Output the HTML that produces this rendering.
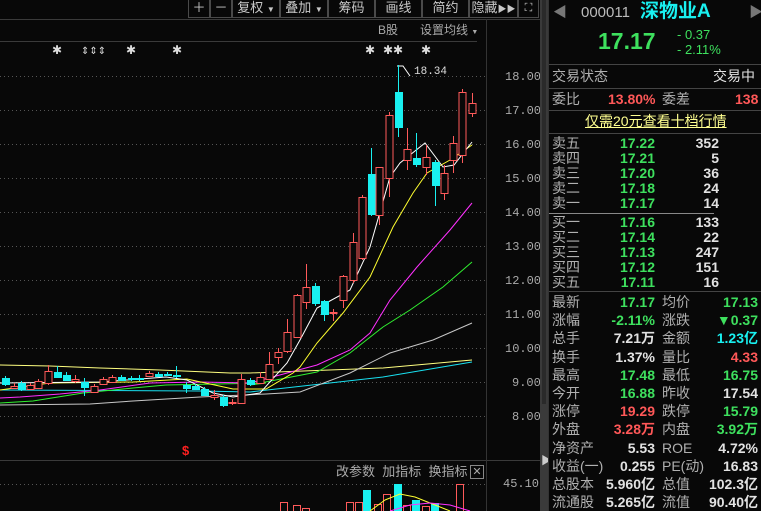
<!DOCTYPE html>
<html style="overflow:hidden;width:761px;height:511px"><head><meta charset="utf-8"><style>
*{margin:0;padding:0;box-sizing:border-box}
body{width:761px;height:511px;background:#080808;overflow:hidden;position:relative;font-family:"Liberation Sans","Noto Sans CJK SC",sans-serif;color:#b4b4b4}
.a{position:absolute;white-space:nowrap;line-height:1}
.tb{position:absolute;top:0;height:18px;border:1px solid #4a4a4a;border-top:none;color:#c8c8c8;font-size:13px;text-align:center;line-height:16px}
.g{color:#3ee05e}.r{color:#ff5858}.w{color:#e2e2e2}.c{color:#19f0f0}.l{color:#b0b0b0}
.rp{font-size:14px}
.hl{position:absolute;height:1px;background:#3a3a3a}
</style></head><body>
<div class="tb" style="left:188px;width:22px">＋</div>
<div class="tb" style="left:210px;width:22px">－</div>
<div class="tb" style="left:232px;width:48px">复权 <span style="font-size:8px">▼</span></div>
<div class="tb" style="left:280px;width:48px">叠加 <span style="font-size:8px">▼</span></div>
<div class="tb" style="left:328px;width:47px">筹码</div>
<div class="tb" style="left:375px;width:47px">画线</div>
<div class="tb" style="left:422px;width:47px">简约</div>
<div class="tb" style="left:469px;width:49px">隐藏<span style="font-size:9px">▶▶</span></div>
<div class="tb" style="left:518px;width:21px;font-size:11px">⛶</div>
<div class="hl" style="left:0;top:19px;width:540px"></div>
<div class="hl" style="left:0;top:41px;width:477px"></div>
<div class="hl" style="left:0;top:460px;width:540px"></div>
<div style="position:absolute;left:486px;top:19px;width:1px;height:492px;background:#333"></div>
<div style="position:absolute;left:540px;top:0;width:8px;height:511px;background:#3a3a3a"></div>
<div style="position:absolute;left:542px;top:0;width:4px;height:404px;background:#2a2a2a"></div>
<div class="a" style="left:541px;top:456px;color:#ccc;font-size:11px">▶</div>
<div class="a" style="left:378px;top:24px;font-size:12px;color:#aaa">B股</div>
<div class="a" style="left:420px;top:24px;font-size:12px;color:#aaa">设置均线 <span style="font-size:7px">▼</span></div>
<div class="a" style="left:182px;top:444px;font-size:13px;color:#ff2020;font-weight:bold">$</div>
<div class="a" style="left:336px;top:465px;font-size:13px;color:#aaa">改参数&nbsp; 加指标&nbsp; 换指标</div>
<div style="position:absolute;left:470px;top:465px;width:14px;height:14px;border:1px solid #888;color:#aaa;font-size:11px;line-height:12px;text-align:center">✕</div>
<div class="a" style="left:503px;top:478px;font-size:12px;color:#aaa;font-family:'Liberation Mono',monospace">45.10</div>
<svg style="position:absolute;left:0;top:0" width="540" height="511">
<g stroke="#555" stroke-dasharray="1 3" stroke-width="1">
<line x1="0" y1="76.5" x2="486" y2="76.5"/><line x1="0" y1="110.5" x2="486" y2="110.5"/><line x1="0" y1="144.5" x2="486" y2="144.5"/><line x1="0" y1="178.5" x2="486" y2="178.5"/><line x1="0" y1="212.5" x2="486" y2="212.5"/><line x1="0" y1="246.5" x2="486" y2="246.5"/><line x1="0" y1="280.5" x2="486" y2="280.5"/><line x1="0" y1="314.5" x2="486" y2="314.5"/><line x1="0" y1="348.5" x2="486" y2="348.5"/><line x1="0" y1="382.5" x2="486" y2="382.5"/><line x1="0" y1="416.5" x2="486" y2="416.5"/><line x1="0" y1="484.5" x2="486" y2="484.5"/>
</g>
<g fill="#aaa" font-family="Liberation Mono,monospace" font-size="12">
<text x="505" y="80">18.00</text><text x="505" y="114">17.00</text><text x="505" y="148">16.00</text><text x="505" y="182">15.00</text><text x="505" y="216">14.00</text><text x="505" y="250">13.00</text><text x="505" y="284">12.00</text><text x="505" y="318">11.00</text><text x="505" y="352">10.00</text><text x="512" y="386">9.00</text><text x="512" y="420">8.00</text>
</g>
<g fill="#ddd" font-size="12" font-family="DejaVu Sans,sans-serif">
<text x="52" y="54">✱</text><text x="81" y="54" font-size="10">⇕⇕⇕</text><text x="126" y="54">✱</text><text x="172" y="54">✱</text><text x="365" y="54">✱</text><text x="383" y="54">✱✱</text><text x="421" y="54">✱</text>
</g>
<g fill="none" stroke-width="1">
<polyline stroke="#ffff80" points="0,365 50,366 100,368 160,370 230,373 250,373 383,368 472,360"/>
<polyline stroke="#19e0f0" points="0,390 200,391 250,392 383,377 472,362"/>
<polyline stroke="#c8c8c8" points="0,405 90,404 133,401 200,397 266,394 300,392 350,373 390,353 433,340 472,323"/>
<polyline stroke="#30f030" points="0,403 33,401 83,393 133,388 166,385 266,383 250,385 317,372 350,353 383,327 410,310 443,287 472,262"/>
<polyline stroke="#ff30ff" points="0,398 20,397 60,394 100,390 150,383 200,382 250,383 317,365 350,350 370,333 390,300 417,267 450,230 472,203"/>
<polyline stroke="#ffff30" points="0,390 50,383 133,382 187,379 233,389 266,389 293,373 300,367 317,343 343,313 370,277 393,227 413,193 427,173 450,160 472,145"/>
<polyline stroke="#fff" points="0,383 100,382 166,377 187,380 213,393 233,397 260,393 287,363 300,340 317,308 350,290 370,247 390,177 400,163 425,143 443,167 454,165 472,142"/>
</g>
<g id="c"></g>
<polyline fill="none" stroke="#fff" points="410,76 403,66 397,66"/>
<text x="414" y="74" fill="#ddd" font-size="11" font-family="Liberation Mono,monospace">18.34</text>
<line x1="398.5" y1="65" x2="398.5" y2="92" stroke="#19f0f0"/>
</svg>
<script>
var d=[[5,0,378,384,376,386],[14,1,386,388,383,389],[21,0,383,389,381,391],[30,1,385,389,383,390],[38,1,381,388,379,389],[48,1,371,383,365,385],[57,0,372,377,366,378],[66,0,375,380,372,381],[75,1,379,381,375,383],[84,0,382,387,378,396],[94,1,386,392,384,393],[103,1,379,384,377,385],[112,1,377,382,375,383],[121,0,377,380,375,381],[131,0,378,379,376,381],[139,0,378,379,375,381],[149,1,373,376,371,377],[158,0,374,376,372,377],[167,0,374,375,372,376],[176,0,375,376,366,378],[186,0,385,388,382,393],[195,0,386,389,384,390],[204,0,389,395,387,396],[214,1,395,397,390,400],[223,0,397,405,395,407],[232,1,402,403,399,405],[241,1,379,403,374,404],[250,0,380,384,378,386],[260,1,377,383,372,384],[269,1,364,379,352,380],[278,1,352,357,348,364],[287,1,332,351,319,353],[297,1,295,337,294,338],[306,1,287,302,264,309],[315,0,286,303,283,306],[324,0,301,314,300,321],[333,1,312,313,309,321],[343,1,276,300,275,308],[353,1,242,280,233,283],[362,1,197,258,195,260],[371,0,174,214,148,216],[379,1,167,215,167,225],[389,1,115,178,112,197],[398,0,92,127,65,137],[407,1,149,160,128,170],[416,0,158,164,133,167],[426,1,157,167,145,175],[435,0,162,185,160,206],[444,1,173,193,165,200],[453,1,143,160,136,173],[462,1,92,155,89,163],[472,1,103,113,93,117]];
var s='';d.forEach(function(k){var x=k[0],col=k[1]?'#ff5a5a':'#19f0f0',w=7,h=Math.max(1,k[3]-k[2]);
s+='<line x1="'+(x+.5)+'" y1="'+k[4]+'" x2="'+(x+.5)+'" y2="'+k[5]+'" stroke="'+col+'"/>';
if(k[1])s+='<rect x="'+(x-3)+'" y="'+(k[2]+.5)+'" width="'+w+'" height="'+h+'" fill="#080808" stroke="'+col+'"/>';
else s+='<rect x="'+(x-3)+'" y="'+k[2]+'" width="'+(w+1)+'" height="'+(h+1)+'" fill="'+col+'"/>';});
var v=[[284,1,502],[297,1,505],[306,1,508],[350,1,502],[359,1,502],[367,0,490],[378,1,504],[387,1,494],[398,0,484],[407,1,505],[416,0,500],[426,1,506],[435,0,503],[460,1,484]];
v.forEach(function(k){var col=k[1]?'#ff5a5a':'#19f0f0',hh=512-k[2];if(k[1])s+='<rect x="'+(k[0]-3.5)+'" y="'+(k[2]+.5)+'" width="7" height="'+hh+'" fill="none" stroke="'+col+'"/>';else s+='<rect x="'+(k[0]-4)+'" y="'+k[2]+'" width="8" height="'+hh+'" fill="'+col+'"/>';});
s+='<polyline fill="none" stroke="#ffff30" points="370,511 385,500 400,494 415,497 430,503 445,509 450,511"/><polyline fill="none" stroke="#ff30ff" points="390,511 410,505 430,503 450,505 470,511"/>';
document.getElementById('c').innerHTML=s;
</script>
<div style="position:absolute;left:548px;top:0;width:213px;height:511px;background:#080808;border-left:1px solid #333"></div>
<div class="a" style="left:553px;top:5px;color:#777;font-size:14px">◀</div>
<div class="a" style="left:749px;top:5px;color:#777;font-size:14px">▶</div>
<div class="a" style="left:581px;top:5px;font-size:15px;color:#bbb">000011</div>
<div class="a c" style="left:640px;top:2px;font-size:19px;font-weight:bold">深物业A</div>
<div class="a g" style="left:598px;top:30px;font-size:23px;font-weight:bold">17.17</div>
<div class="a g" style="left:677px;top:28px;font-size:13px">- 0.37</div>
<div class="a g" style="left:677px;top:43px;font-size:13px">- 2.11%</div>
<div class="hl" style="left:549px;top:64px;width:212px;background:#444"></div>
<div class="a l rp" style="left:552px;top:69px">交易状态</div>
<div class="a w rp" style="left:713px;top:69px">交易中</div>
<div class="hl" style="left:549px;top:88px;width:212px;background:#444"></div>
<div class="a l rp" style="left:552px;top:92px">委比</div>
<div class="a r rp" style="left:608px;top:92px;font-weight:bold">13.80%</div>
<div class="a l rp" style="left:662px;top:92px">委差</div>
<div class="a r rp" style="left:735px;top:92px;font-weight:bold">138</div>
<div class="hl" style="left:549px;top:110px;width:212px;background:#444"></div>
<div class="a rp" style="left:585px;top:114px;color:#ffff90;text-decoration:underline">仅需20元查看十档行情</div>
<div class="hl" style="left:549px;top:133px;width:212px;background:#444"></div>
<div id="ob"></div>
<div class="hl" style="left:549px;top:213px;width:165px;background:#888"></div>
<div class="hl" style="left:549px;top:291px;width:212px;background:#444"></div>
<div id="st"></div>
<script>
var o=[['卖五','17.22','352'],['卖四','17.21','5'],['卖三','17.20','36'],['卖二','17.18','24'],['卖一','17.17','14'],['买一','17.16','133'],['买二','17.14','22'],['买三','17.13','247'],['买四','17.12','151'],['买五','17.11','16']];
var h='';o.forEach(function(r,i){var y=136+i*15+(i>4?4:0);
h+='<div class="a l rp" style="left:552px;top:'+y+'px">'+r[0]+'</div><div class="a g rp" style="right:106px;top:'+y+'px;font-weight:bold">'+r[1]+'</div><div class="a w rp" style="right:42px;top:'+y+'px;font-weight:bold">'+r[2]+'</div>';});
document.getElementById('ob').innerHTML=h;
var t=[['最新','17.17','g','均价','17.13','g'],['涨幅','-2.11%','g','涨跌','▼0.37','g'],['总手','7.21万','w','金额','1.23亿','c'],['换手','1.37%','w','量比','4.33','r'],['最高','17.48','g','最低','16.75','g'],['今开','16.88','g','昨收','17.54','w'],['涨停','19.29','r','跌停','15.79','g'],['外盘','3.28万','r','内盘','3.92万','g'],['净资产','5.53','w','ROE','4.72%','w'],['收益(一)','0.255','w','PE(动)','16.83','w'],['总股本','5.960亿','w','总值','102.3亿','w'],['流通股','5.265亿','w','流值','90.40亿','w']];
h='';t.forEach(function(r,i){var y=295+i*18.2;
h+='<div class="a l rp" style="left:552px;top:'+y+'px">'+r[0]+'</div><div class="a '+r[2]+' rp" style="right:106px;top:'+y+'px;font-weight:bold">'+r[1]+'</div><div class="a l rp" style="left:662px;top:'+y+'px">'+r[3]+'</div><div class="a '+r[5]+' rp" style="right:3px;top:'+y+'px;font-weight:bold">'+r[4]+'</div>';});
document.getElementById('st').innerHTML=h;
</script>
</body></html>
